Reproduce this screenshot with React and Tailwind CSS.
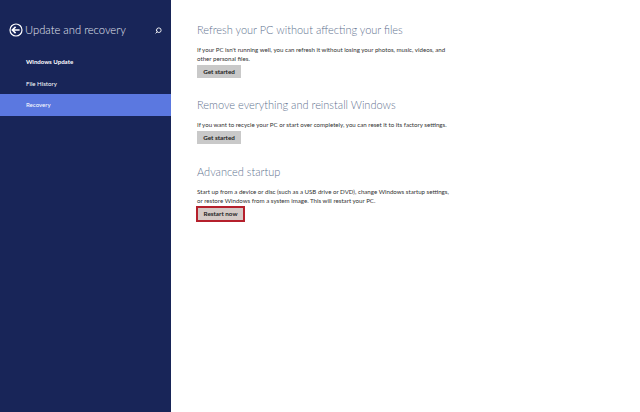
import React from 'react'
import { Search } from 'lucide-react'

const font = { fontFamily: 'Lato, sans-serif' }

function BackIcon() {
  return (
    <svg width="14" height="14" viewBox="0 0 14 14" fill="none" stroke="#fff" className="shrink-0">
      <circle cx="7" cy="7" r="6" strokeWidth="1.2" />
      <path d="M3.4 7H10.6M6.6 3.9L3.4 7L6.6 10.1" strokeWidth="1.6" />
    </svg>
  )
}

function Section({ title, lines, button, mt, highlight }) {
  return (
    <section className={mt}>
      <h2 className="text-[11px] leading-[18px] font-light text-[#5f7390] whitespace-nowrap">{title}</h2>
      <div className="mt-[6px] text-[6.15px] leading-[9px] text-[#333] whitespace-nowrap">
        {lines.map((l) => <p key={l}>{l}</p>)}
      </div>
      {highlight ? (
        <button className="mt-[1px] -ml-[1px] w-[49px] h-[16px] bg-[#d4c9c6] border-2 border-[#b5202c] text-[6.3px] font-bold text-[#222] block">{button}</button>
      ) : (
        <button className="mt-[2px] w-[44px] h-[13px] bg-[#c9c9c9] text-[6.3px] font-bold text-[#222] block">{button}</button>
      )}
    </section>
  )
}

export default function App() {
  return (
    <div className="w-[640px] h-[412px] flex bg-white overflow-hidden" style={font}>
      <aside className="w-[171px] shrink-0 bg-[#182558] text-white">
        <div className="flex items-center pt-[20px] pl-[9px] pr-[9px] h-[40px]">
          <BackIcon />
          <h1 className="ml-[2px] text-[11.2px] leading-[16px] font-light text-[#e4e8f2] whitespace-nowrap">Update and recovery</h1>
          <Search size={7} strokeWidth={3} className="ml-auto -scale-x-100" />
        </div>
        <nav className="mt-[11px] text-[6.1px]">
          <div className="h-[22px] flex items-center pl-[26px] font-bold">Windows Update</div>
          <div className="h-[21px] flex items-center pl-[26px]">File History</div>
          <div className="h-[22px] flex items-center pl-[26px] bg-[#5b78e0]">Recovery</div>
        </nav>
      </aside>
      <main className="flex-1 pl-[26px] pt-[21px]">
        <Section
          title="Refresh your PC without affecting your files"
          lines={["If your PC isn't running well, you can refresh it without losing your photos, music, videos, and", 'other personal files.']}
          button="Get started"
        />
        <Section
          mt="mt-[18px]"
          title="Remove everything and reinstall Windows"
          lines={["If you want to recycle your PC or start over completely, you can reset it to its factory settings."]}
          button="Get started"
        />
        <Section
          mt="mt-[19px]"
          title="Advanced startup"
          lines={['Start up from a device or disc (such as a USB drive or DVD), change Windows startup settings,', 'or restore Windows from a system image. This will restart your PC.']}
          button="Restart now"
          highlight
        />
      </main>
    </div>
  )
}
